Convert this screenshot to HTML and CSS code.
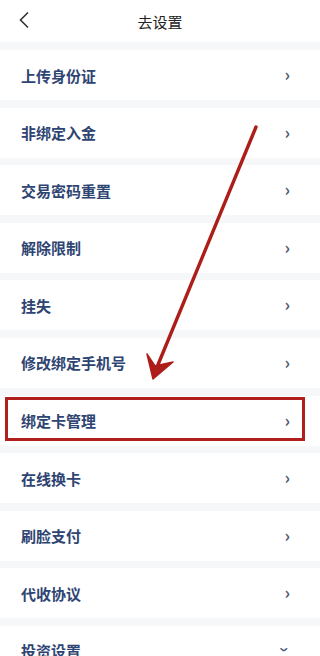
FILE: index.html
```html
<!DOCTYPE html>
<html lang="zh-CN">
<head>
  <meta charset="UTF-8">
  <title>去设置</title>
  <link rel="stylesheet" href="styles.css">
</head>
<body>

<div class="header">
  <svg class="back" width="12" height="18" viewBox="0 0 12 18"><path d="M10 1.5 L2.5 9 L10 16.5" fill="none" stroke="#333" stroke-width="1.6"/></svg>
  <div class="title">去设置</div>
</div>

<div class="list">
  <div class="row"><span>上传身份证</span><i class="arrow">›</i></div>
  <div class="row"><span>非绑定入金</span><i class="arrow">›</i></div>
  <div class="row"><span>交易密码重置</span><i class="arrow">›</i></div>
  <div class="row"><span>解除限制</span><i class="arrow">›</i></div>
  <div class="row"><span>挂失</span><i class="arrow">›</i></div>
  <div class="row"><span>修改绑定手机号</span><i class="arrow">›</i></div>
  <div class="row marked"><span>绑定卡管理</span><i class="arrow">›</i><div class="mark"></div></div>
  <div class="row"><span>在线换卡</span><i class="arrow">›</i></div>
  <div class="row"><span>刷脸支付</span><i class="arrow">›</i></div>
  <div class="row"><span>代收协议</span><i class="arrow">›</i></div>
  <div class="row"><span>投资设置</span><i class="arrow down">›</i></div>
</div>

<!-- 标注箭头 -->
<svg class="pointer" width="320" height="656" viewBox="0 0 320 656">
  <path d="M256 127 L155 372" stroke="#ad1d1a" stroke-width="3.4" stroke-linecap="round" fill="none"/>
  <path d="M153 379 L147 354 L155 366 L173 362 Z" fill="#ad1d1a" stroke="#ad1d1a" stroke-width="1.5" stroke-linejoin="round"/>
</svg>

</body>
</html>
```

FILE: styles.css
```css
body {
  margin: 0;
  padding: 0;
  width: 320px;
  height: 656px;
  overflow: hidden;
  background: #f5f7f9;
  font-family: "Noto Sans CJK SC", "Noto Sans", sans-serif;
  position: relative;
}
.header {
  height: 42px;
  background: #fff;
  display: flex;
  align-items: center;
  justify-content: center;
  position: relative;
  margin-bottom: 8px;
}
.header .back {
  position: absolute;
  left: 18px;
  top: 11px;
}
.title {
  font-size: 15px;
  color: #222;
}
.list {
  display: flex;
  flex-direction: column;
  gap: 7.6px;
}
.row {
  height: 50px;
  flex-shrink: 0;
  background: #fff;
  display: flex;
  align-items: center;
  justify-content: space-between;
  padding: 0 30px 0 21px;
  position: relative;
}
.row span {
  font-size: 15px;
  font-weight: 600;
  color: #2e4472;
}
.arrow {
  font-style: normal;
  font-size: 17px;
  font-weight: 700;
  color: #4b5a78;
  line-height: 1;
  margin-top: -3px;
}
.arrow.down {
  transform: rotate(90deg);
}
.mark {
  position: absolute;
  left: 5px;
  right: 15px;
  top: 1px;
  height: 44px;
  border: 3.5px solid #b01f1c;
  box-sizing: border-box;
}
.pointer {
  position: absolute;
  left: 0;
  top: 0;
  pointer-events: none;
}
```
